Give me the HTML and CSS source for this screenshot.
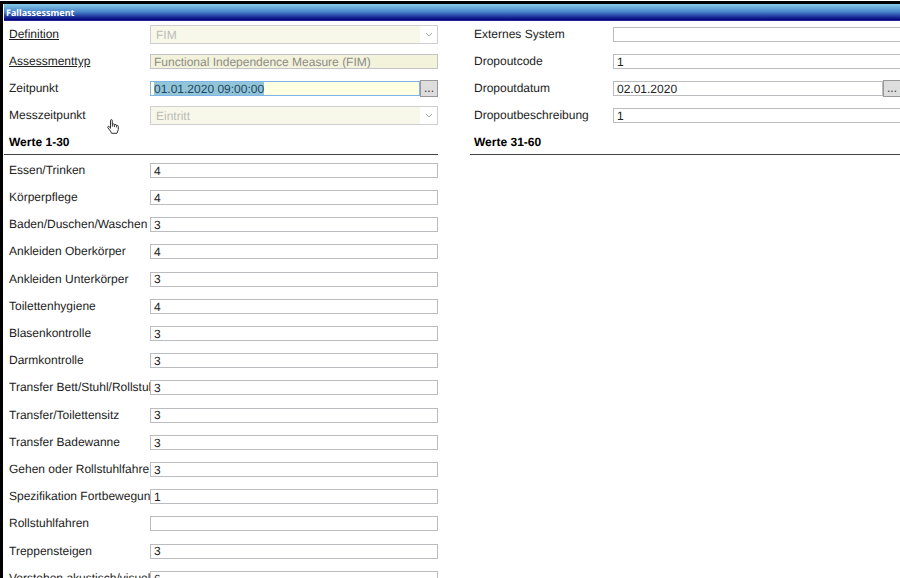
FILE: index.html
```
<!DOCTYPE html>
<html lang="de">
<head>
  <meta charset="UTF-8">
  <meta name="viewport" content="width=device-width, initial-scale=1.0">
  <title>Fallassessment</title>
  <link rel="stylesheet" href="styles.css">
</head>
<body>
  <div class="window">
    <h1 class="title-bar">Fallassessment</h1>
    <form class="columns">
      <div class="column">
        <div class="row">
          <label class="linked" for="definition">Definition</label>
          <div class="select-box">
            <select id="definition" disabled><option>FIM</option></select>
            <svg viewBox="0 0 8 6"><path d="M1 1 L4 4 L7 1"/></svg>
          </div>
        </div>
        <div class="row">
          <label class="linked" for="typ">Assessmenttyp</label>
          <input type="text" id="typ" value="Functional Independence Measure (FIM)" disabled>
        </div>
        <div class="row">
          <label for="zeitpunkt">Zeitpunkt</label>
          <input type="text" class="active" id="zeitpunkt" value="01.01.2020 09:00:00">
          <button type="button">...</button>
        </div>
        <div class="row">
          <label for="messzeitpunkt">Messzeitpunkt</label>
          <div class="select-box">
            <select id="messzeitpunkt" disabled><option>Eintritt</option></select>
            <svg viewBox="0 0 8 6"><path d="M1 1 L4 4 L7 1"/></svg>
          </div>
        </div>
        <h2>Werte 1-30</h2>
        <div class="row">
          <label for="w1">Essen/Trinken</label>
          <input type="text" id="w1" value="4">
        </div>
        <div class="row">
          <label for="w2">Körperpflege</label>
          <input type="text" id="w2" value="4">
        </div>
        <div class="row">
          <label for="w3">Baden/Duschen/Waschen</label>
          <input type="text" id="w3" value="3">
        </div>
        <div class="row">
          <label for="w4">Ankleiden Oberkörper</label>
          <input type="text" id="w4" value="4">
        </div>
        <div class="row">
          <label for="w5">Ankleiden Unterkörper</label>
          <input type="text" id="w5" value="3">
        </div>
        <div class="row">
          <label for="w6">Toilettenhygiene</label>
          <input type="text" id="w6" value="4">
        </div>
        <div class="row">
          <label for="w7">Blasenkontrolle</label>
          <input type="text" id="w7" value="3">
        </div>
        <div class="row">
          <label for="w8">Darmkontrolle</label>
          <input type="text" id="w8" value="3">
        </div>
        <div class="row">
          <label for="w9">Transfer Bett/Stuhl/Rollstul</label>
          <input type="text" id="w9" value="3">
        </div>
        <div class="row">
          <label for="w10">Transfer/Toilettensitz</label>
          <input type="text" id="w10" value="3">
        </div>
        <div class="row">
          <label for="w11">Transfer Badewanne</label>
          <input type="text" id="w11" value="3">
        </div>
        <div class="row">
          <label for="w12">Gehen oder Rollstuhlfahre</label>
          <input type="text" id="w12" value="3">
        </div>
        <div class="row">
          <label for="w13">Spezifikation Fortbewegun</label>
          <input type="text" id="w13" value="1">
        </div>
        <div class="row">
          <label for="w14">Rollstuhlfahren</label>
          <input type="text" id="w14" value="">
        </div>
        <div class="row">
          <label for="w15">Treppensteigen</label>
          <input type="text" id="w15" value="3">
        </div>
        <div class="row">
          <label for="w16">Verstehen akustisch/visuel</label>
          <input type="text" id="w16" value="6">
        </div>
      </div>

      <div class="column column-right">
        <div class="row">
          <label for="extern">Externes System</label>
          <input type="text" id="extern" value="">
        </div>
        <div class="row">
          <label for="code">Dropoutcode</label>
          <input type="text" id="code" value="1">
        </div>
        <div class="row">
          <label for="datum">Dropoutdatum</label>
          <input type="text" id="datum" value="02.01.2020">
          <button type="button">...</button>
        </div>
        <div class="row">
          <label for="beschreibung">Dropoutbeschreibung</label>
          <input type="text" id="beschreibung" value="1">
        </div>
        <h2>Werte 31-60</h2>
      </div>
    </form>
  </div>

  <!-- hand pointer -->
  <svg class="pointer" viewBox="0 0 12 15">
    <path d="M3.5 9.5 V1.8 Q3.5 .6 4.4 .6 Q5.3 .6 5.3 1.8 V5 Q7.2 4.4 7.4 5.6 Q9.2 5 9.4 6.3 Q11.3 6 11.3 7.6 V10.6 L10 14.3 H4.6 L3.4 12 L.8 8.6 Q.6 7.2 1.8 7.2 L3.5 9 M5.4 5 V7.6 M7.4 5.6 V8 M9.4 6.3 V8.4"/>
  </svg>

  <script>
    const zeitpunkt = document.getElementById('zeitpunkt');
    zeitpunkt.focus();
    zeitpunkt.select();
  </script>
</body>
</html>
```
FILE: styles.css
```
* {
  box-sizing: border-box;
}

body {
  margin: 0;
  height: 100vh;
  overflow: hidden;
  background-color: white;
  color: #222;
  font-family: "Liberation Sans", Arial, sans-serif;
  font-size: 12px;
  text-rendering: geometricPrecision;
}

.window {
  min-height: 100vh;
  margin-top: 1px;
  border-top: 3px solid black;
  border-left: 3px solid black;
  padding-left: 1px;
}

.title-bar {
  margin: 0;
  height: 17px;
  padding-left: 2px;
  background: linear-gradient(#86cbe6, #4a86cc 45%, #00007c 94%, #4a4ab4);
  color: white;
  font-family: "Noto Sans", Tahoma, sans-serif;
  font-size: 9px;
  line-height: 17px;
}

.columns {
  display: grid;
  grid-template-columns: 1fr 1fr;
  column-gap: 32px;
  margin-right: -4px;
}

.column {
  display: grid;
  grid-auto-rows: 27px 27px 27px 27px 28px;
  align-content: start;
}

.row {
  display: flex;
  align-items: center;
  min-width: 0;
  padding-left: 5px;
}

.column-right .row {
  padding-left: 4px;
  padding-right: 3px;
}

label {
  flex: none;
  width: 141px;
  padding-bottom: 1px;
  white-space: nowrap;
}

.column-right label {
  width: 139px;
}

.linked {
  text-decoration: underline;
}

h2 {
  height: 26px;
  margin: 0;
  padding-left: 5px;
  border-bottom: 1px solid #444;
  color: black;
  font-size: 12px;
  line-height: 26px;
}

.column-right h2 {
  padding-left: 4px;
}

input {
  flex: 1;
  min-width: 0;
  height: 15px;
  padding: 0 3px;
  border: 1px solid #bbbcc0;
  background-color: white;
  color: #222;
  font: inherit;
  text-rendering: inherit;
}

input:disabled {
  border-color: #c4c4c8;
  background-color: #f3f3dc;
  color: #8c8c84;
}

input.active {
  border-color: #7eb4ea;
  outline: none;
  background-color: #ffffe1;
}

.active::selection {
  background-color: #93c5d9;
  color: #1d4560;
}

.select-box {
  position: relative;
  flex: 1;
  min-width: 0;
}

select {
  display: block;
  width: 100%;
  height: 19px;
  padding: 0 22px 0 5px;
  appearance: none;
  border: 1px solid #cfcfd2;
  border-radius: 0;
  background: linear-gradient(to left, white 17px, #f8f8ea 17px);
  font: inherit;
  text-rendering: inherit;
}

select:disabled {
  color: #bcbcb6;
  opacity: 1;
}

.select-box svg {
  position: absolute;
  top: 7px;
  right: 5px;
  width: 8px;
  height: 6px;
  fill: none;
  stroke: #a8a8a8;
}

button {
  flex: none;
  width: 18px;
  height: 17px;
  padding: 0;
  border: 1px solid #989898;
  background-color: #dddddd;
  color: #333;
  font: inherit;
  line-height: 15px;
}

.pointer {
  position: absolute;
  top: 119px;
  left: 107px;
  width: 12px;
  height: 15px;
  fill: white;
  stroke: #333;
}
```
